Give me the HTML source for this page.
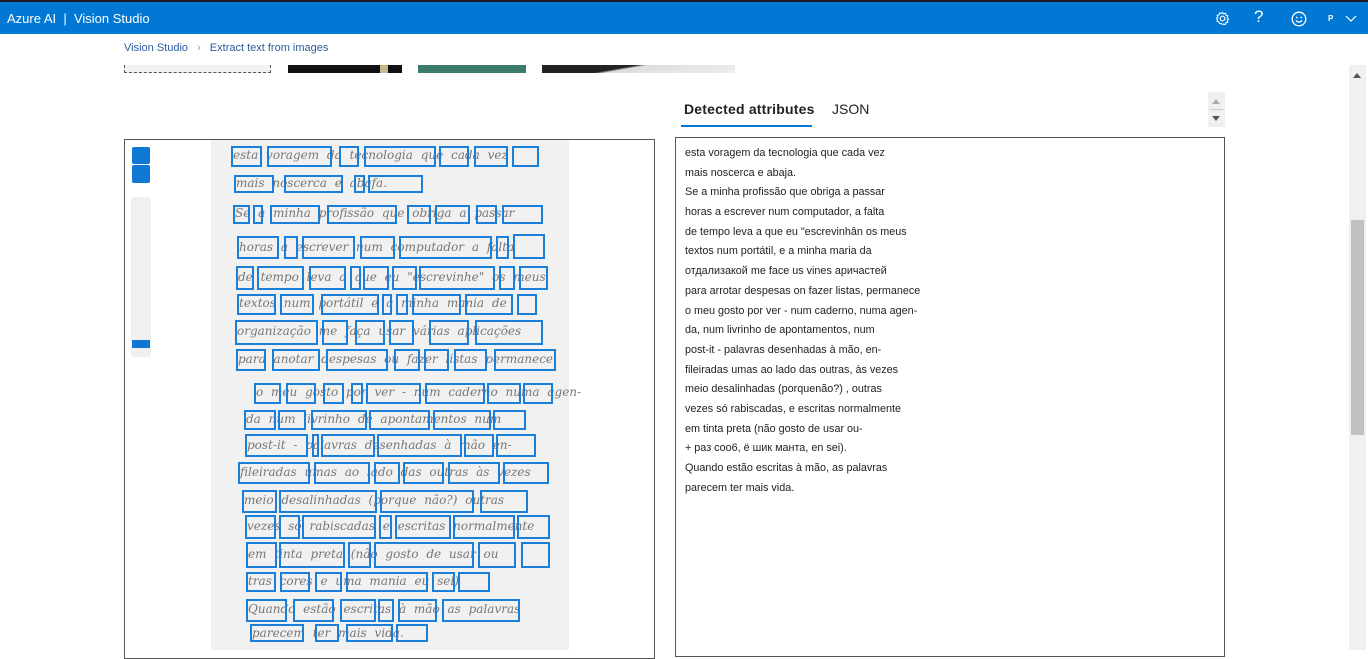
<!DOCTYPE html>
<html><head><meta charset="utf-8"><style>
*{box-sizing:border-box;margin:0;padding:0}
body{width:1368px;height:650px;overflow:hidden;background:#fff;font-family:"Liberation Sans",sans-serif;position:relative}
.a{position:absolute}
.top{left:0;top:0;width:1368px;height:34px;background:#0078d4;border-top:2px solid #1b1b1f;color:#fff}
.bx{position:absolute;border:2px solid #1a7fd8}
.txt div{height:19.7px;font-size:10.8px;color:#222;line-height:19.7px;white-space:nowrap}
.hw div{position:absolute;font-family:"DejaVu Serif",serif;font-style:italic;font-size:12px;color:#777;white-space:nowrap;letter-spacing:0;word-spacing:4px !important}
</style></head><body>
<div class="a top">
 <div class="a" style="left:7px;top:9px;font-size:13px">Azure AI &nbsp;|&nbsp; Vision Studio</div>
 <svg class="a" style="left:1215px;top:9px" width="15" height="15" viewBox="0 0 16 16"><circle cx="8" cy="8" r="2.5" fill="none" stroke="#fff" stroke-width="1.2"/><path d="M8 1.5l1.3 1.6 2-.6.4 2 2 .7-.7 2 1.5 1.5-1.5 1.3.6 2-2 .5-.6 2-2-.6L8 14.5l-1.3-1.5-2 .6-.5-2-2-.6.6-2L1.5 8l1.4-1.4-.6-2 2-.5.6-2 2 .6z" fill="none" stroke="#fff" stroke-width="1.1"/></svg>
 <div class="a" style="left:1254px;top:5px;font-size:17px;font-weight:300">?</div>
 <svg class="a" style="left:1291px;top:9px" width="16" height="16" viewBox="0 0 16 16"><circle cx="8" cy="8" r="6.8" fill="none" stroke="#fff" stroke-width="1.3"/><circle cx="5.8" cy="6.5" r=".9" fill="#fff"/><circle cx="10.2" cy="6.5" r=".9" fill="#fff"/><path d="M4.8 9.5q3.2 3 6.4 0" fill="none" stroke="#fff" stroke-width="1.2"/></svg>
 <div class="a" style="left:1328px;top:12px;font-size:8px;font-weight:bold">P</div>
 <svg class="a" style="left:1345px;top:13px" width="12" height="8" viewBox="0 0 12 8"><path d="M1 1l5 5 5-5" fill="none" stroke="#fff" stroke-width="1.2"/></svg>
</div>
<div class="a" style="left:124px;top:42px;font-size:11px;color:#2b5a9e">Vision Studio <span style="color:#999;margin:0 6px">›</span> Extract text from images</div>
<div class="a" style="left:124px;top:65px;width:147px;height:8px;border:1px dashed #555;border-top:none;background:#f3f2f1"></div>
<div class="a" style="left:288px;top:65px;width:114px;height:8px;background:#111"></div>
<div class="a" style="left:380px;top:65px;width:8px;height:8px;background:#c9b98a"></div>
<div class="a" style="left:418px;top:65px;width:108px;height:8px;background:#3a7a6a"></div>
<div class="a" style="left:542px;top:65px;width:193px;height:8px;background:linear-gradient(170deg,#222 40%,#ddd 45%,#eee)"></div>
<div class="a" style="left:684px;top:101px;font-size:14px;color:#222;font-weight:bold;letter-spacing:.2px">Detected attributes</div>
<div class="a" style="left:681px;top:125px;width:131px;height:2px;background:#0078d4"></div>
<div class="a" style="left:832px;top:101px;font-size:14px;color:#222">JSON</div>
<div class="a" style="left:1208px;top:92px;width:17px;height:35px;background:#f0f0f0"></div>
<div class="a" style="left:1212px;top:99px;border:4px solid transparent;border-bottom:5px solid #aaa;border-top:none"></div>
<div class="a" style="left:1210px;top:109px;width:13px;height:1px;background:#ccc"></div>
<div class="a" style="left:1212px;top:116px;border:4px solid transparent;border-top:5px solid #555;border-bottom:none"></div>
<div class="a" style="left:1349px;top:65px;width:17px;height:585px;background:#f0f0f0"></div>
<div class="a" style="left:1353px;top:73px;border:4px solid transparent;border-bottom:5px solid #555;border-top:none"></div>
<div class="a" style="left:1351px;top:220px;width:13px;height:215px;background:#c1c1c1"></div>
<div class="a" style="left:124px;top:139px;width:531px;height:520px;border:1px solid #555"></div>
<div class="a" style="left:675px;top:137px;width:550px;height:520px;border:1px solid #555"></div>
<div class="a" style="left:211px;top:140px;width:358px;height:510px;background:#f1f1f1"></div>
<div class="a" style="left:132px;top:147px;width:18px;height:17px;background:#0f78d4;border-radius:2px"></div>
<div class="a" style="left:132px;top:165px;width:18px;height:18px;background:#0f78d4;border-radius:2px"></div>
<div class="a" style="left:131px;top:197px;width:20px;height:160px;background:#f0f0f0;border-radius:3px"></div>
<div class="a" style="left:132px;top:340px;width:18px;height:8px;background:#0f78d4"></div>
<div class="a txt" style="left:685px;top:144px">
<div>esta voragem da tecnologia que cada vez</div><div>mais noscerca e abaja.</div><div>Se a minha profissão que obriga a passar</div><div>horas a escrever num computador, a falta</div><div>de tempo leva a que eu "escrevinhân os meus</div><div>textos num portátil, e a minha maria da</div><div>отдализакой me face us vines аричастей</div><div>para arrotar despesas on fazer listas, permanece</div><div>o meu gosto por ver - num caderno, numa agen-</div><div>da, num livrinho de apontamentos, num</div><div>post-it - palavras desenhadas à mão, en-</div><div>fileiradas umas ao lado das outras, às vezes</div><div>meio desalinhadas (porquenão?) , outras</div><div>vezes só rabiscadas, e escritas normalmente</div><div>em tinta preta (não gosto de usar ou-</div><div>+ раз соо6, ё шик манта, en sei).</div><div>Quando estão escritas à mão, as palavras</div><div>parecem ter mais vida.</div>
</div>
<div class="hw">
<div style="left:233px;top:148px">esta voragem da tecnologia que cada vez</div>
<div style="left:236px;top:176px">mais noscerca e abafa.</div>
<div style="left:235px;top:206px">Se a minha profissão que obriga a passar</div>
<div style="left:239px;top:240px">horas a escrever num computador a falta</div>
<div style="left:238px;top:270px">de tempo leva a que eu "escrevinhe" os meus</div>
<div style="left:239px;top:296px">textos num portátil e a minha mania de</div>
<div style="left:237px;top:324px">organização me faça usar várias aplicações</div>
<div style="left:238px;top:352px">para anotar despesas ou fazer listas permanece</div>
<div style="left:256px;top:385px">o meu gosto por ver - num caderno numa agen-</div>
<div style="left:246px;top:412px">da num livrinho de apontamentos num</div>
<div style="left:247px;top:438px">post-it - palavras desenhadas à mão en-</div>
<div style="left:240px;top:465px">fileiradas umas ao lado das outras às vezes</div>
<div style="left:244px;top:493px">meio desalinhadas (porque não?) outras</div>
<div style="left:247px;top:519px">vezes só rabiscadas e escritas normalmente</div>
<div style="left:248px;top:547px">em tinta preta (não gosto de usar ou</div>
<div style="left:248px;top:574px">tras cores e uma mania eu sei)</div>
<div style="left:248px;top:602px">Quando estão escritas à mão as palavras</div>
<div style="left:252px;top:626px">parecem ter mais vida.</div>
</div>
<div style="position:absolute;left:0;top:0">
<div class="bx" style="left:231px;top:146px;width:31px;height:21px"></div><div class="bx" style="left:267px;top:146px;width:65px;height:21px"></div><div class="bx" style="left:339px;top:146px;width:20px;height:21px"></div><div class="bx" style="left:364px;top:146px;width:72px;height:21px"></div><div class="bx" style="left:439px;top:146px;width:30px;height:21px"></div><div class="bx" style="left:474px;top:146px;width:34px;height:21px"></div><div class="bx" style="left:512px;top:146px;width:27px;height:21px"></div>
<div class="bx" style="left:234px;top:175px;width:40px;height:18px"></div><div class="bx" style="left:284px;top:175px;width:59px;height:18px"></div><div class="bx" style="left:354px;top:175px;width:11px;height:18px"></div><div class="bx" style="left:368px;top:175px;width:55px;height:18px"></div>
<div class="bx" style="left:233px;top:205px;width:17px;height:19px"></div><div class="bx" style="left:253px;top:205px;width:10px;height:19px"></div><div class="bx" style="left:270px;top:205px;width:50px;height:19px"></div><div class="bx" style="left:327px;top:205px;width:70px;height:19px"></div><div class="bx" style="left:407px;top:205px;width:24px;height:19px"></div><div class="bx" style="left:435px;top:205px;width:35px;height:19px"></div><div class="bx" style="left:476px;top:205px;width:21px;height:19px"></div><div class="bx" style="left:502px;top:205px;width:41px;height:19px"></div>
<div class="bx" style="left:237px;top:236px;width:42px;height:23px"></div><div class="bx" style="left:284px;top:236px;width:14px;height:23px"></div><div class="bx" style="left:302px;top:236px;width:53px;height:23px"></div><div class="bx" style="left:360px;top:236px;width:35px;height:23px"></div><div class="bx" style="left:399px;top:236px;width:93px;height:23px"></div><div class="bx" style="left:496px;top:236px;width:13px;height:23px"></div><div class="bx" style="left:513px;top:234px;width:32px;height:25px"></div>
<div class="bx" style="left:236px;top:266px;width:18px;height:24px"></div><div class="bx" style="left:257px;top:266px;width:47px;height:24px"></div><div class="bx" style="left:309px;top:266px;width:37px;height:24px"></div><div class="bx" style="left:350px;top:266px;width:11px;height:24px"></div><div class="bx" style="left:363px;top:266px;width:26px;height:24px"></div><div class="bx" style="left:392px;top:266px;width:25px;height:24px"></div><div class="bx" style="left:419px;top:266px;width:76px;height:24px"></div><div class="bx" style="left:499px;top:266px;width:16px;height:24px"></div><div class="bx" style="left:519px;top:266px;width:29px;height:24px"></div>
<div class="bx" style="left:237px;top:294px;width:39px;height:21px"></div><div class="bx" style="left:280px;top:294px;width:34px;height:21px"></div><div class="bx" style="left:321px;top:294px;width:58px;height:21px"></div><div class="bx" style="left:382px;top:294px;width:10px;height:21px"></div><div class="bx" style="left:396px;top:294px;width:12px;height:21px"></div><div class="bx" style="left:412px;top:294px;width:49px;height:21px"></div><div class="bx" style="left:465px;top:294px;width:48px;height:21px"></div><div class="bx" style="left:517px;top:294px;width:20px;height:21px"></div>
<div class="bx" style="left:235px;top:320px;width:83px;height:25px"></div><div class="bx" style="left:322px;top:320px;width:26px;height:25px"></div><div class="bx" style="left:355px;top:320px;width:30px;height:25px"></div><div class="bx" style="left:389px;top:320px;width:25px;height:25px"></div><div class="bx" style="left:429px;top:320px;width:40px;height:25px"></div><div class="bx" style="left:475px;top:320px;width:68px;height:25px"></div>
<div class="bx" style="left:236px;top:349px;width:30px;height:22px"></div><div class="bx" style="left:272px;top:349px;width:48px;height:22px"></div><div class="bx" style="left:326px;top:349px;width:62px;height:22px"></div><div class="bx" style="left:394px;top:349px;width:26px;height:22px"></div><div class="bx" style="left:424px;top:349px;width:25px;height:22px"></div><div class="bx" style="left:454px;top:349px;width:33px;height:22px"></div><div class="bx" style="left:494px;top:349px;width:62px;height:22px"></div>
<div class="bx" style="left:254px;top:383px;width:27px;height:21px"></div><div class="bx" style="left:286px;top:383px;width:30px;height:21px"></div><div class="bx" style="left:323px;top:383px;width:21px;height:21px"></div><div class="bx" style="left:351px;top:383px;width:12px;height:21px"></div><div class="bx" style="left:366px;top:383px;width:55px;height:21px"></div><div class="bx" style="left:425px;top:383px;width:60px;height:21px"></div><div class="bx" style="left:487px;top:383px;width:34px;height:21px"></div><div class="bx" style="left:523px;top:383px;width:30px;height:21px"></div>
<div class="bx" style="left:244px;top:410px;width:32px;height:20px"></div><div class="bx" style="left:278px;top:410px;width:28px;height:20px"></div><div class="bx" style="left:311px;top:410px;width:56px;height:20px"></div><div class="bx" style="left:369px;top:410px;width:61px;height:20px"></div><div class="bx" style="left:433px;top:410px;width:58px;height:20px"></div><div class="bx" style="left:493px;top:410px;width:33px;height:20px"></div>
<div class="bx" style="left:245px;top:434px;width:63px;height:23px"></div><div class="bx" style="left:312px;top:434px;width:7px;height:23px"></div><div class="bx" style="left:321px;top:434px;width:54px;height:23px"></div><div class="bx" style="left:377px;top:434px;width:85px;height:23px"></div><div class="bx" style="left:464px;top:434px;width:30px;height:23px"></div><div class="bx" style="left:496px;top:434px;width:40px;height:23px"></div>
<div class="bx" style="left:238px;top:462px;width:72px;height:22px"></div><div class="bx" style="left:314px;top:462px;width:56px;height:22px"></div><div class="bx" style="left:374px;top:462px;width:26px;height:22px"></div><div class="bx" style="left:403px;top:462px;width:41px;height:22px"></div><div class="bx" style="left:448px;top:462px;width:52px;height:22px"></div><div class="bx" style="left:503px;top:462px;width:46px;height:22px"></div>
<div class="bx" style="left:242px;top:490px;width:35px;height:23px"></div><div class="bx" style="left:279px;top:490px;width:98px;height:23px"></div><div class="bx" style="left:380px;top:490px;width:94px;height:23px"></div><div class="bx" style="left:480px;top:490px;width:48px;height:23px"></div>
<div class="bx" style="left:245px;top:515px;width:31px;height:24px"></div><div class="bx" style="left:279px;top:515px;width:21px;height:24px"></div><div class="bx" style="left:302px;top:515px;width:74px;height:24px"></div><div class="bx" style="left:379px;top:515px;width:13px;height:24px"></div><div class="bx" style="left:395px;top:515px;width:56px;height:24px"></div><div class="bx" style="left:453px;top:515px;width:62px;height:24px"></div><div class="bx" style="left:517px;top:515px;width:33px;height:24px"></div>
<div class="bx" style="left:246px;top:542px;width:31px;height:26px"></div><div class="bx" style="left:279px;top:542px;width:66px;height:26px"></div><div class="bx" style="left:348px;top:542px;width:23px;height:26px"></div><div class="bx" style="left:374px;top:542px;width:100px;height:26px"></div><div class="bx" style="left:478px;top:542px;width:38px;height:26px"></div><div class="bx" style="left:521px;top:542px;width:29px;height:26px"></div>
<div class="bx" style="left:246px;top:572px;width:30px;height:20px"></div><div class="bx" style="left:280px;top:572px;width:30px;height:20px"></div><div class="bx" style="left:315px;top:572px;width:27px;height:20px"></div><div class="bx" style="left:346px;top:572px;width:82px;height:20px"></div><div class="bx" style="left:432px;top:572px;width:23px;height:20px"></div><div class="bx" style="left:458px;top:572px;width:32px;height:20px"></div>
<div class="bx" style="left:246px;top:599px;width:41px;height:23px"></div><div class="bx" style="left:293px;top:599px;width:41px;height:23px"></div><div class="bx" style="left:340px;top:599px;width:36px;height:23px"></div><div class="bx" style="left:378px;top:599px;width:16px;height:23px"></div><div class="bx" style="left:398px;top:599px;width:39px;height:23px"></div><div class="bx" style="left:442px;top:599px;width:78px;height:23px"></div>
<div class="bx" style="left:250px;top:624px;width:54px;height:18px"></div><div class="bx" style="left:315px;top:624px;width:24px;height:18px"></div><div class="bx" style="left:346px;top:624px;width:47px;height:18px"></div><div class="bx" style="left:396px;top:624px;width:32px;height:18px"></div>
</div>
</body></html>
